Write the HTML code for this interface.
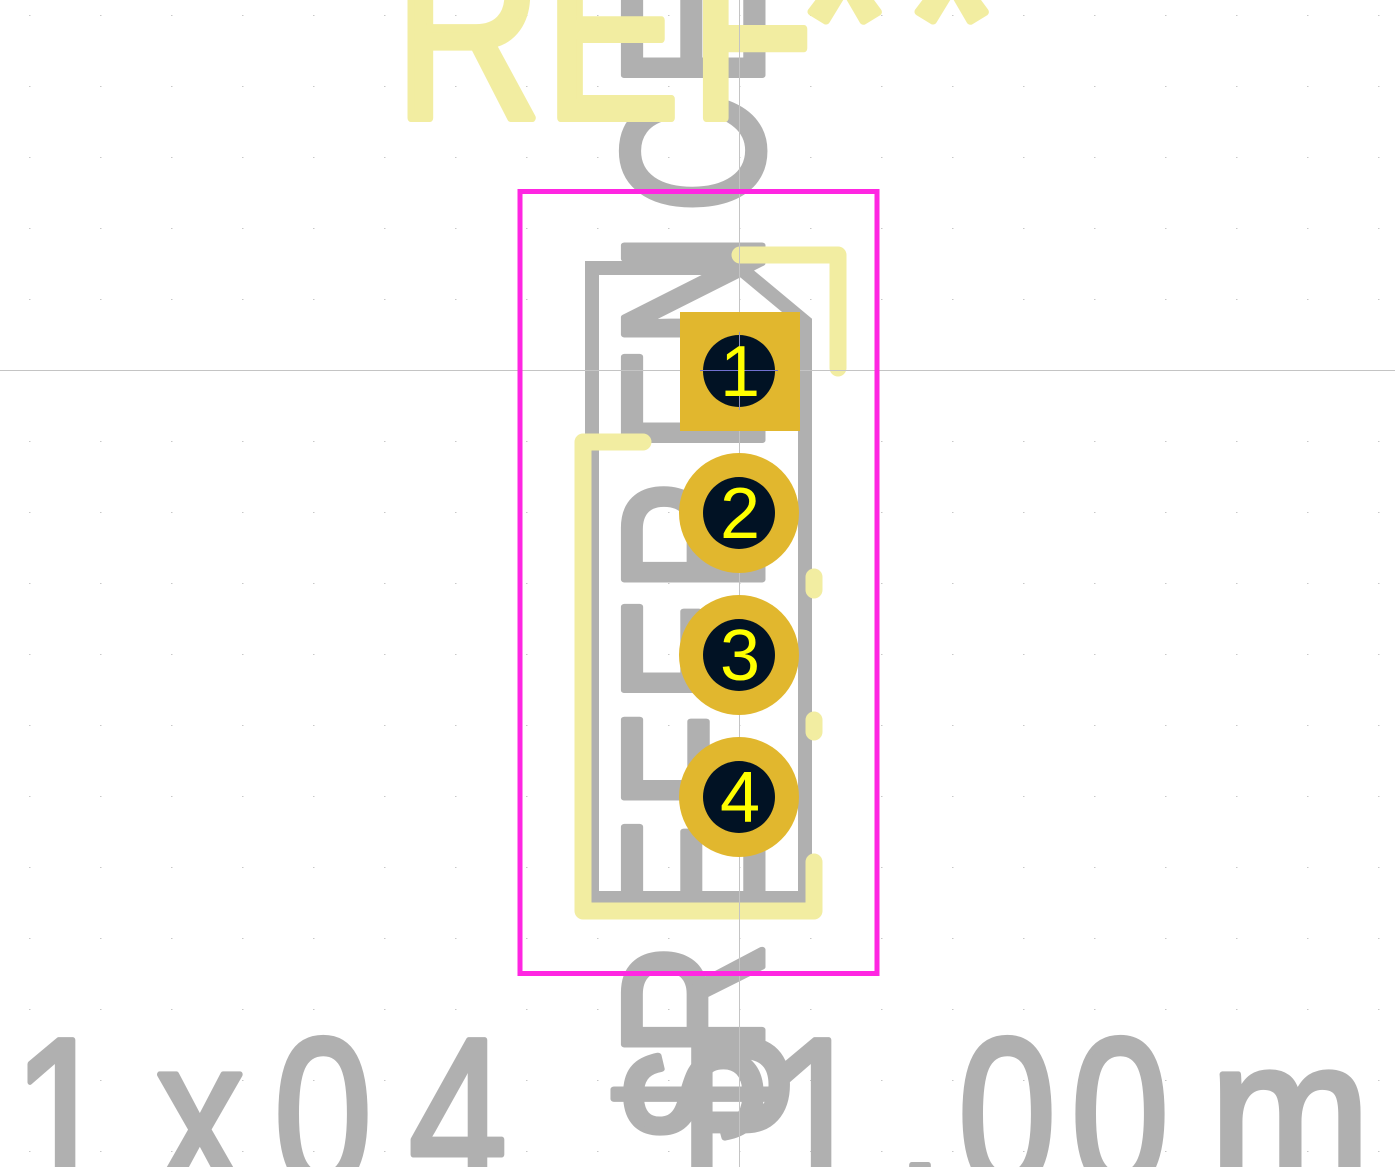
<!DOCTYPE html>
<html><head><meta charset="utf-8"><style>
html,body{margin:0;padding:0;background:#fff;overflow:hidden;width:1395px;height:1167px;}
svg{display:block;}
text{font-family:"Liberation Sans",sans-serif;}
</style></head><body>
<svg width="1395" height="1167" viewBox="0 0 1395 1167" xmlns="http://www.w3.org/2000/svg" style="overflow:hidden">
<defs>
<pattern id="g" x="29" y="15" width="71" height="71" patternUnits="userSpaceOnUse">
<rect x="0" y="0" width="1.5" height="1" fill="#c8c8c8"/>
</pattern>
</defs>
<rect width="1395" height="1167" fill="#fff"/>
<rect width="1395" height="1167" fill="url(#g)"/>

<g fill="#b0b0b0" stroke="#b0b0b0" stroke-width="7" stroke-linejoin="round" font-size="200">
<text transform="translate(762,1095) rotate(-90) scale(0.8,1)" text-anchor="middle">$</text>
<text transform="translate(762,1000) rotate(-90) scale(0.8,1)" text-anchor="middle">R</text>
<text transform="translate(762,870) rotate(-90) scale(0.8,1)" text-anchor="middle">E</text>
<text transform="translate(762,762) rotate(-90) scale(0.8,1)" text-anchor="middle">F</text>
<text transform="translate(762,650) rotate(-90) scale(0.8,1)" text-anchor="middle">E</text>
<text transform="translate(762,535) rotate(-90) scale(0.8,1)" text-anchor="middle">R</text>
<text transform="translate(762,400) rotate(-90) scale(0.8,1)" text-anchor="middle">E</text>
<text transform="translate(762,290) rotate(-90) scale(0.8,1)" text-anchor="middle">N</text>
<text transform="translate(762,155) rotate(-90) scale(0.8,1)" text-anchor="middle">C</text>
<text transform="translate(762,35) rotate(-90) scale(0.8,1)" text-anchor="middle">E</text>
</g>

<path d="M592 268 H740 L805 322 V898 H592 Z" fill="none" stroke="#b0b0b0" stroke-width="14" stroke-linejoin="miter"/>

<g fill="#b0b0b0" stroke="#b0b0b0" stroke-width="6" stroke-linejoin="round" font-size="215">
<text transform="translate(62,1188) scale(0.82,1)" text-anchor="middle">1</text>
<text transform="translate(200,1188) scale(0.82,1)" text-anchor="middle">x</text>
<text transform="translate(323,1188) scale(0.82,1)" text-anchor="middle">0</text>
<text transform="translate(458,1188) scale(0.82,1)" text-anchor="middle">4</text>
<text transform="translate(738,1188) scale(0.82,1)" text-anchor="middle">P</text>
<text transform="translate(818,1188) scale(0.82,1)" text-anchor="middle">1</text>
<text transform="translate(920,1188) scale(0.82,1)" text-anchor="middle">.</text>
<text transform="translate(1007,1188) scale(0.82,1)" text-anchor="middle">0</text>
<text transform="translate(1120,1188) scale(0.82,1)" text-anchor="middle">0</text>
<text transform="translate(1290,1188) scale(0.9,1)" text-anchor="middle">m</text>
</g>

<g fill="#f2eda1" stroke="#f2eda1" stroke-width="8" stroke-linejoin="round">
<text transform="translate(468,118) scale(0.82,1)" text-anchor="middle" font-size="250">R</text>
<text transform="translate(612,118) scale(0.82,1)" text-anchor="middle" font-size="250">E</text>
<text transform="translate(752,118) scale(0.82,1)" text-anchor="middle" font-size="250">F</text>
<text transform="translate(845,105)" text-anchor="middle" font-size="250">*</text>
<text transform="translate(952,105)" text-anchor="middle" font-size="250">*</text>
</g>

<g fill="none" stroke="#f2eda1" stroke-width="17" stroke-linecap="round" stroke-linejoin="round">
<path d="M740 255 H838 V368"/>
<path d="M643 442 H583 V911 H814 V862"/>
<path d="M814 577 V590"/>
<path d="M814 720 V732"/>
</g>

<line x1="0" y1="370.5" x2="1395" y2="370.5" stroke="#c4c4c4" stroke-width="1"/>
<line x1="739.5" y1="0" x2="739.5" y2="1167" stroke="#c4c4c4" stroke-width="1"/>

<rect x="680" y="312" width="120" height="119" fill="#e1b72e"/>
<circle cx="739" cy="513" r="60" fill="#e1b72e"/>
<circle cx="739" cy="655" r="60" fill="#e1b72e"/>
<circle cx="739" cy="797" r="60" fill="#e1b72e"/>
<g fill="#011224">
<circle cx="739" cy="371" r="36"/>
<circle cx="739" cy="513" r="36"/>
<circle cx="739" cy="655" r="36"/>
<circle cx="739" cy="797" r="36"/>
</g>
<line x1="700" y1="370.5" x2="778" y2="370.5" stroke="#7070d0" stroke-width="1"/>
<line x1="739.5" y1="332" x2="739.5" y2="410" stroke="#9090c0" stroke-width="1"/>
<g fill="#ffff00" font-size="72" text-anchor="middle">
<text x="740" y="396">1</text>
<text x="740" y="538">2</text>
<text x="740" y="680">3</text>
<text x="740" y="822">4</text>
</g>

<rect x="520" y="191.5" width="357" height="782" fill="none" stroke="#ff26e2" stroke-width="5"/>
</svg>
</body></html>
